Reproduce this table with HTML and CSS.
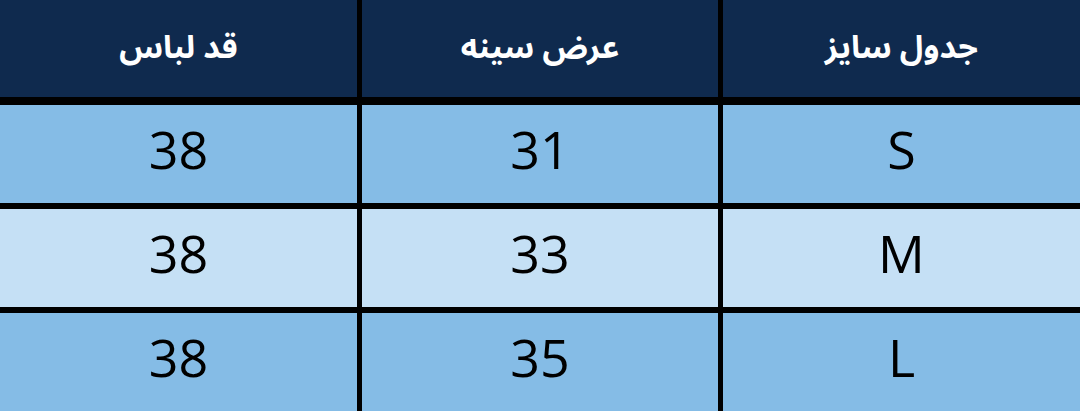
FILE: index.html
```html
<!DOCTYPE html>
<html lang="fa" dir="rtl">
<head>
<meta charset="utf-8">
<title>جدول سایز</title>
<link rel="stylesheet" href="styles.css">
</head>
<body>
<div class="table">
  <div class="row head">
    <div class="cell">جدول سایز</div>
    <div class="cell">عرض سینه</div>
    <div class="cell">قد لباس</div>
  </div>
  <div class="row dark">
    <div class="cell">S</div>
    <div class="cell">31</div>
    <div class="cell">38</div>
  </div>
  <div class="row light">
    <div class="cell">M</div>
    <div class="cell">33</div>
    <div class="cell">38</div>
  </div>
  <div class="row dark">
    <div class="cell">L</div>
    <div class="cell">35</div>
    <div class="cell">38</div>
  </div>
</div>
</body>
</html>
```

FILE: styles.css
```css
html, body {
  margin: 0;
  padding: 0;
  background: #000;
}
.table {
  width: 1080px;
  height: 411px;
  display: flex;
  flex-direction: column;
  gap: 6px;
  background: #000;
  direction: rtl;
  overflow: hidden;
}
.row {
  display: grid;
  grid-template-columns: 357px 356px 357px;
  column-gap: 5px;
  height: 98px;
}
.row.head {
  height: 97px;
  margin-bottom: 2px;
}
.cell {
  display: flex;
  align-items: center;
  justify-content: center;
  box-sizing: border-box;
}
.head .cell {
  background: #0f2a4e;
  color: #fff;
  font-family: "Noto Sans Arabic", "Vazirmatn", "DejaVu Sans", sans-serif;
  font-weight: bold;
  font-size: 32px;
  padding-bottom: 2px;
}
.dark .cell,
.light .cell {
  font-family: "Open Sans", sans-serif;
  font-size: 52px;
  color: #000;
  padding-bottom: 12px;
}
.dark .cell { background: #85bce6; }
.light .cell { background: #c5e0f5; }
```
